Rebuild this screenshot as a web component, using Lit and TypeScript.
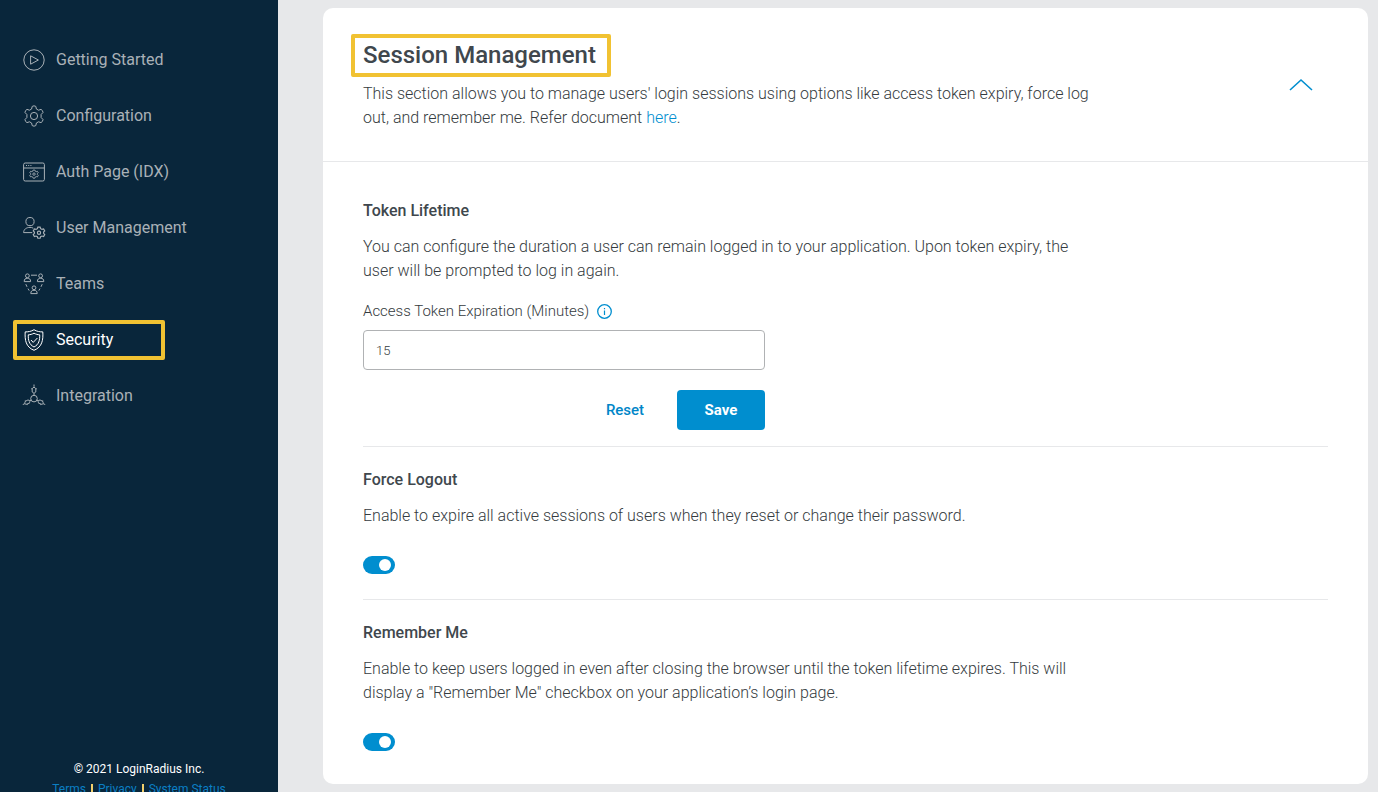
import { LitElement, html, css, svg } from "lit";
import { customElement, property, state } from "lit/decorators.js";
import { classMap } from "lit/directives/class-map.js";

const smallGear = svg`<path d="M-1-4.2h2l.4 1.3 1.2.6 1.4-.4 1 1.7-1 1v1.2l1 1-1 1.7-1.4-.4-1.2.6L1 5.4h-2l-.4-1.3-1.2-.6-1.4.4-1-1.7 1-1V0l-1-1 1-1.7 1.4.4 1.2-.6z"/><circle cy=".6" r="1.4"/>`;

const person = svg`<circle cy="-2.2" r="1.9"/><path d="M-3.2 3.6c0-2.6 1.2-3.3 3.2-3.3s3.2.7 3.2 3.3z"/>`;

const arm = svg`<path d="M11-.5v2.3M9.2 3.6Q11 .6 12.8 3.600v3.400q-1.800 2.600-3.600 0zM8.200 3.800h1M12.800 3.800h1M11 8.400v1.900"/>`;

const icons: Record<string, unknown> = {
  play: svg`<circle cx="11" cy="11" r="10.2"/><path d="M7.6 6.8v8.4l7.8-4.2z"/>`,
  gear: svg`<path d="M9.2 1.4Q11 .2 12.8 1.4L13.4 4l2.1 1.2 2.5-.8q1.9.9 2 3.1L18.1 9.5v3l1.9 2q-.1 2.2-2 3.1l-2.5-.8-2.1 1.2-.6 2.6q-1.8 1.2-3.6 0L8.6 18l-2.1-1.2-2.5.8q-1.9-.9-2-3.1l1.9-2v-3L2 7.5q.1-2.2 2-3.1l2.5.8L8.6 4z"/><circle cx="11" cy="11" r="3.6"/>`,
  page: svg`<rect x=".6" y="2" width="20.8" height="18" rx="1.6"/><path d="M.6 7h20.8M3 4.5h1M5.2 4.5h1M7.4 4.5h1"/><g transform="translate(11 12.6) scale(.85)">${smallGear}</g>`,
  user: svg`<circle cx="7" cy="4.6" r="4.1"/><path d="M10.3 11.2C9 10.5 8 10.4 7 10.4c-3.8 0-6.3 2-6.4 5.2h8.6"/><g transform="translate(16 15) scale(1.15)">${smallGear}</g>`,
  team: svg`<g transform="translate(4.4 5)">${person}</g><g transform="translate(17.6 5)">${person}</g><g transform="translate(11 17)">${person}</g><path d="M8 2.2h6M2.8 11.2l1.2 2.6M5 15.6l1.2 2M19.2 11.2 18 13.8M17 15.6l-1.2 2"/>`,
  shield: svg`<path d="M11 .7c3 1.9 6 2.2 8.8 2.2.5 8-.6 15.2-8.8 18.4C2.8 18.1 1.700 10.900 2.200 2.900 5 2.900 8 2.600 11 .7z"/><path d="M11 4.200c2 1.100 3.700 1.500 5.700 1.600.2 5.400-.8 9.800-5.700 12.200-4.900-2.400-5.900-6.800-5.700-12.200 2-.1 3.700-.5 5.700-1.600z"/><path d="m8 11 2.200 2.400L14.400 9"/>`,
  nodes: svg`<circle cx="11" cy="13.6" r="3.3"/>${arm}<g transform="translate(11 13.6) rotate(118) scale(.9) translate(-11 -13.6)">${arm}</g><g transform="translate(11 13.6) rotate(-118) scale(.9) translate(-11 -13.6)">${arm}</g>`,
};

@customElement("side-nav")
class SideNav extends LitElement {
  @state() private active = "Security";

  private items = [
    ["Getting Started", "play"],
    ["Configuration", "gear"],
    ["Auth Page (IDX)", "page"],
    ["User Management", "user"],
    ["Teams", "team"],
    ["Security", "shield"],
    ["Integration", "nodes"],
  ];

  static styles = css`
    :host {
      display: flex;
      flex-direction: column;
      box-sizing: border-box;
      position: sticky;
      top: 0;
      height: 100vh;
      overflow: hidden;
      padding: 40px 13px 0;
      background: #09263b;
    }
    nav {
      display: flex;
      flex: 1;
      flex-direction: column;
      align-items: flex-start;
      gap: 16px;
    }
    .item {
      display: flex;
      align-items: center;
      gap: 11px;
      box-sizing: border-box;
      height: 40px;
      min-width: 152px;
      padding: 0 6px;
      border: 4px solid transparent;
      border-radius: 2px;
      color: #a9b1b7;
      font-size: 16px;
      line-height: 24px;
      text-decoration: none;
    }
    .active {
      border-color: #f1c232;
      color: #fff;
    }
    svg {
      width: 22px;
      height: 22px;
      overflow: visible;
      fill: none;
      stroke: currentColor;
      stroke-width: 1;
    }
    footer {
      flex: none;
      height: 33px;
      color: #fff;
      font-size: 12px;
      line-height: 20px;
      text-align: center;
    }
    .links {
      display: flex;
      justify-content: center;
      gap: 5px;
    }
    .links a {
      color: #0b7fc4;
      text-decoration: none;
    }
    .bar {
      width: 2px;
      height: 12px;
      margin-top: 5px;
      background: #f2cf6c;
    }
  `;

  render() {
    return html`
      <nav>
        ${this.items.map(
          ([label, icon]) => html`
            <a
              href="#"
              class=${classMap({ item: true, active: label === this.active })}
              @click=${(e: Event) => {
                e.preventDefault();
                this.active = label;
              }}
              ><svg viewBox="0 0 22 22" aria-hidden="true">${icons[icon]}</svg>${label}</a
            >
          `
        )}
      </nav>
      <footer>
        <div>© 2021 LoginRadius Inc.</div>
        <div class="links">
          <a href="#">Terms</a><span class="bar"></span><a href="#">Privacy</a
          ><span class="bar"></span><a href="#">System Status</a>
        </div>
      </footer>
    `;
  }
}

@customElement("setting-toggle")
class SettingToggle extends LitElement {
  @property() label = "";

  static styles = css`
    :host {
      display: flex;
    }
    input {
      appearance: none;
      display: flex;
      align-items: center;
      box-sizing: border-box;
      width: 32px;
      height: 18px;
      margin: 0;
      padding: 0 4px;
      border-radius: 9px;
      background: #b4b8bb;
      cursor: pointer;
    }
    input:checked {
      justify-content: flex-end;
      background: #008ecf;
    }
    input::before {
      content: "";
      width: 12px;
      height: 12px;
      border-radius: 50%;
      background: #fff;
    }
  `;

  render() {
    return html`<input type="checkbox" role="switch" aria-label=${this.label} checked />`;
  }
}

@customElement("app-root")
class AppRoot extends LitElement {
  @state() private open = true;

  static styles = css`
    :host {
      display: grid;
      grid-template-columns: 278px minmax(0, 1fr);
      min-height: 100vh;
      background: #e7e8ea;
      color: #40474d;
      font-family: Roboto, "Liberation Sans", sans-serif;
      font-size: 16px;
      line-height: 24px;
    }
    main {
      padding: 8px 10px 8px 45px;
    }
    .card {
      border-radius: 10px;
      background: #fff;
    }
    header {
      display: flex;
      align-items: center;
      justify-content: space-between;
      padding: 26px 55px 31px 40px;
      border-bottom: 1px solid #e7e8ea;
    }
    h1,
    h2,
    p {
      margin: 0;
    }
    h1 {
      box-sizing: border-box;
      width: fit-content;
      min-width: 260px;
      margin: 0 0 5px -12px;
      padding: 0 8px;
      border: 4px solid #f1c232;
      border-radius: 2px;
      font-size: 24px;
      font-weight: 500;
      line-height: 35px;
    }
    p {
      max-width: 732px;
      color: #353b40;
      font-weight: 300;
    }
    p a {
      color: #008ecf;
      text-decoration: none;
    }
    button {
      font: inherit;
      border: 0;
      background: none;
      padding: 0;
      cursor: pointer;
    }
    .chevron {
      display: flex;
    }
    .chevron svg {
      width: 24px;
      height: 24px;
      fill: none;
      stroke: #008ecf;
      stroke-width: 1.6;
    }
    .closed svg {
      transform: rotate(180deg);
    }
    .body {
      padding: 16px 40px 12px;
    }
    section {
      display: flex;
      flex-direction: column;
      gap: 12px;
      padding: 21px 0;
    }
    section + section {
      border-top: 1px solid #e7e8ea;
    }
    h2 {
      font-size: 16px;
      font-weight: 500;
      line-height: 24px;
    }
    .token {
      padding-bottom: 16px;
    }
    .switch {
      padding-bottom: 25px;
    }
    .last {
      padding-bottom: 21px;
    }
    setting-toggle {
      margin-top: 16px;
    }
    form {
      display: flex;
      flex-direction: column;
      max-width: 402px;
      margin-top: 4px;
    }
    .label {
      display: flex;
      align-items: center;
      gap: 8px;
      margin-bottom: 7px;
      color: #353b40;
      font-size: 15px;
      font-weight: 300;
    }
    .info {
      display: flex;
    }
    .info svg {
      width: 15px;
      height: 15px;
      fill: none;
      stroke: #008ecf;
    }
    input {
      box-sizing: border-box;
      width: 100%;
      height: 40px;
      padding: 0 12px;
      border: 1px solid #b0b2b4;
      border-radius: 4px;
      color: #353b40;
      font: inherit;
      font-size: 13px;
      font-weight: 300;
    }
    .actions {
      display: flex;
      justify-content: flex-end;
      gap: 8px;
      margin-top: 20px;
    }
    .actions button {
      width: 88px;
      height: 40px;
      border-radius: 4px;
      color: #0086c8;
      font-size: 15px;
      font-weight: 500;
    }
    .actions .save {
      background: #008ecf;
      color: #fff;
      font-weight: 700;
    }
  `;

  private toggleOpen() {
    this.open = !this.open;
  }

  private renderBody() {
    return html`
      <div class="body">
        <section class="token">
          <h2>Token Lifetime</h2>
          <p>
            You can configure the duration a user can remain logged in to your application. Upon
            token expiry, the user will be prompted to log in again.
          </p>
          <form @submit=${(e: Event) => e.preventDefault()}>
            <div class="label">
              <label for="expiry">Access Token Expiration (Minutes)</label>
              <button class="info" type="button" aria-label="More information">
                <svg viewBox="0 0 15 15" aria-hidden="true">
                  <circle cx="7.5" cy="7.5" r="6.8" stroke-width="1.3" />
                  <path d="M7.5 6.500v4.500M7.500 4v1.300" stroke-width="1.2" />
                </svg>
              </button>
            </div>
            <input id="expiry" type="text" inputmode="numeric" value="15" />
            <div class="actions">
              <button type="reset">Reset</button>
              <button type="submit" class="save">Save</button>
            </div>
          </form>
        </section>
        <section class="switch">
          <h2>Force Logout</h2>
          <p>Enable to expire all active sessions of users when they reset or change their password.</p>
          <setting-toggle label="Force Logout"></setting-toggle>
        </section>
        <section class="switch last">
          <h2>Remember Me</h2>
          <p>
            Enable to keep users logged in even after closing the browser until the token lifetime
            expires. This will display a "Remember Me" checkbox on your application’s login page.
          </p>
          <setting-toggle label="Remember Me"></setting-toggle>
        </section>
      </div>
    `;
  }

  render() {
    return html`
      <side-nav></side-nav>
      <main>
        <div class="card">
          <header>
            <div>
              <h1>Session Management</h1>
              <p>
                This section allows you to manage users' login sessions using options like access
                token expiry, force log out, and remember me. Refer document <a href="#">here</a>.
              </p>
            </div>
            <button
              class=${classMap({ chevron: true, closed: !this.open })}
              aria-label="Toggle section"
              aria-expanded=${this.open}
              @click=${this.toggleOpen}
            >
              <svg viewBox="0 0 24 24" aria-hidden="true"><path d="M1 20 12 10l11 10" /></svg>
            </button>
          </header>
          ${this.open ? this.renderBody() : ""}
        </div>
      </main>
    `;
  }
}
